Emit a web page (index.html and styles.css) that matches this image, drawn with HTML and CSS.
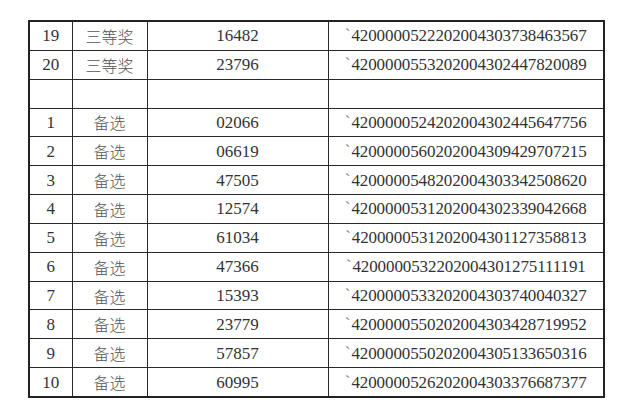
FILE: index.html
```html
<!DOCTYPE html>
<html lang="zh">
<head>
<meta charset="utf-8">
<link rel="stylesheet" href="styles.css">
</head>
<body>
<div class="page">
<table class="list">
<colgroup>
<col class="c1"><col class="c2"><col class="c3"><col class="c4">
</colgroup>
<tbody>
<tr><td class="num">19</td><td class="cn">三等奖</td><td class="num">16482</td><td class="code"><span class="tick">`</span>4200000522202004303738463567</td></tr>
<tr><td class="num">20</td><td class="cn">三等奖</td><td class="num">23796</td><td class="code"><span class="tick">`</span>4200000553202004302447820089</td></tr>
<tr><td></td><td></td><td></td><td></td></tr>
<tr><td class="num">1</td><td class="cn">备选</td><td class="num">02066</td><td class="code"><span class="tick">`</span>4200000524202004302445647756</td></tr>
<tr><td class="num">2</td><td class="cn">备选</td><td class="num">06619</td><td class="code"><span class="tick">`</span>4200000560202004309429707215</td></tr>
<tr><td class="num">3</td><td class="cn">备选</td><td class="num">47505</td><td class="code"><span class="tick">`</span>4200000548202004303342508620</td></tr>
<tr><td class="num">4</td><td class="cn">备选</td><td class="num">12574</td><td class="code"><span class="tick">`</span>4200000531202004302339042668</td></tr>
<tr><td class="num">5</td><td class="cn">备选</td><td class="num">61034</td><td class="code"><span class="tick">`</span>4200000531202004301127358813</td></tr>
<tr><td class="num">6</td><td class="cn">备选</td><td class="num">47366</td><td class="code"><span class="tick">`</span>4200000532202004301275111191</td></tr>
<tr><td class="num">7</td><td class="cn">备选</td><td class="num">15393</td><td class="code"><span class="tick">`</span>4200000533202004303740040327</td></tr>
<tr><td class="num">8</td><td class="cn">备选</td><td class="num">23779</td><td class="code"><span class="tick">`</span>4200000550202004303428719952</td></tr>
<tr><td class="num">9</td><td class="cn">备选</td><td class="num">57857</td><td class="code"><span class="tick">`</span>4200000550202004305133650316</td></tr>
<tr><td class="num">10</td><td class="cn">备选</td><td class="num">60995</td><td class="code"><span class="tick">`</span>4200000526202004303376687377</td></tr>
</tbody>
</table>
</div>
</body>
</html>
```

FILE: styles.css
```css
html, body {
  margin: 0;
  padding: 0;
  background: #ffffff;
}
.page {
  padding: 20px 0 0 28px;
}
.list {
  border-collapse: collapse;
  table-layout: fixed;
  width: 575px;
  border: 2px solid #222;
  font-family: "Liberation Serif", "Noto Sans CJK SC", serif;
  font-size: 17px;
  color: #333;
}
.c1 { width: 43px; }
.c2 { width: 75px; }
.c3 { width: 181px; }
.c4 { width: 276px; }
.list td {
  height: 27.85px;
  padding: 0;
  border: 1.5px solid #2a2a2a;
  text-align: center;
  vertical-align: middle;
  line-height: 1;
}
.cn {
  font-family: "Noto Sans CJK SC", sans-serif;
  font-weight: 300;
  font-size: 16px;
  color: #555;
}
.code {
  letter-spacing: -0.1px;
}
.tick {
  color: #777;
  margin-right: 1px;
  position: relative;
  top: -1px;
}
```
